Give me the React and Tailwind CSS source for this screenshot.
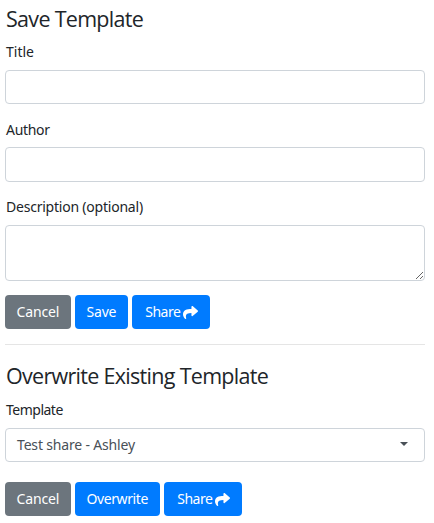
import React from 'react';
import { FaShare } from 'react-icons/fa';

function Heading({ children }) {
  return (
    <h2 className="h-7 pl-px font-['Open_Sans','Noto_Sans',sans-serif] text-[21.5px] leading-[27px] font-normal tracking-[-0.7px] whitespace-nowrap">
      {children}
    </h2>
  );
}

function Label({ htmlFor, className = '', children }) {
  return (
    <label htmlFor={htmlFor} className={`block h-5 pl-px text-[14px] leading-5 whitespace-nowrap ${className}`}>
      {children}
    </label>
  );
}

function Button({ className, children }) {
  return (
    <button
      type="button"
      className={`flex h-[34px] items-center rounded-[4px] text-[14px] leading-5 whitespace-nowrap text-white ${className}`}
    >
      {children}
    </button>
  );
}

function ShareButton() {
  return (
    <Button className="w-[78px] bg-[#007bff] pl-[11px]">
      <span className="w-[39.5px] tracking-[-0.5px]">Share</span>
      <FaShare className="size-[15px]" />
    </Button>
  );
}

const field = 'block w-full rounded-[4px] border border-[#ced4da] bg-white outline-none';

export default function App() {
  return (
    <main className="h-[523px] w-[434px] overflow-hidden bg-white pt-[5px] pr-[9px] pl-[5px] font-['Noto_Sans','Open_Sans',sans-serif] text-[#212529]">
      <form>
        <Heading>Save Template</Heading>
        <Label htmlFor="title" className="mt-[9px]">Title</Label>
        <input id="title" className={`${field} mt-2 h-[34px]`} />
        <Label htmlFor="author" className="mt-4 tracking-[-0.3px]">Author</Label>
        <input id="author" className={`${field} mt-[7px] h-[35px]`} />
        <Label htmlFor="description" className="mt-[15px] tracking-[-0.22px]">Description (optional)</Label>
        <textarea id="description" className={`${field} mt-2 h-14 resize-y`} />
        <div className="mt-[14px] flex gap-1">
          <Button className="w-[66px] bg-[#6c757d] pl-[11.5px] tracking-[-0.15px]">Cancel</Button>
          <Button className="w-[53px] bg-[#007bff] pl-[11.5px] tracking-[-0.2px]">Save</Button>
          <ShareButton />
        </div>
      </form>
      <hr className="mt-[15px] border-t border-[#e5e5e5]" />
      <form className="pt-[17px]">
        <Heading>Overwrite Existing Template</Heading>
        <Label className="mt-[10px] tracking-[-0.5px]">Template</Label>
        <button type="button" className={`${field} mt-2 flex h-[34px] items-center justify-between pr-4 pl-[11px] text-[14px] text-[#495057]`}>
          <span className="pb-0.5 tracking-[-0.17px]">Test share - Ashley</span>
          <span className="mb-[3px] border-x-4 border-t-4 border-x-transparent border-t-[#495057]" />
        </button>
        <div className="mt-5 flex gap-1">
          <Button className="w-[66px] bg-[#6c757d] pl-[11.5px] tracking-[-0.15px]">Cancel</Button>
          <Button className="w-[85px] bg-[#007bff] pl-[11.5px] tracking-[-0.4px]">Overwrite</Button>
          <ShareButton />
        </div>
      </form>
    </main>
  );
}
